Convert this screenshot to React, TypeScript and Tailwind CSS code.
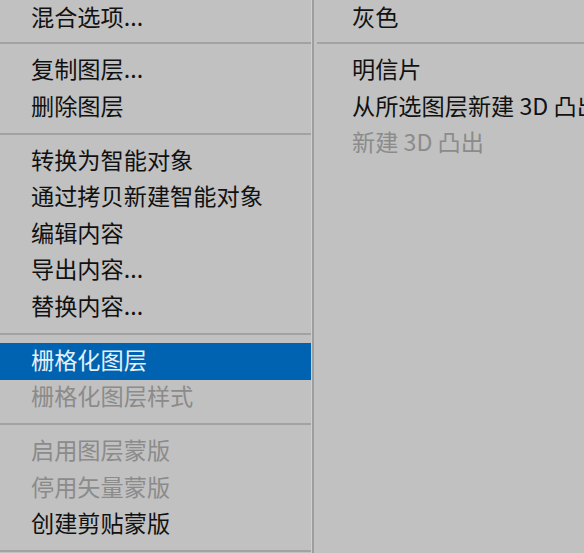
import React from "react";

type Item = { label: string; disabled?: boolean; active?: boolean } | "sep";

const left: Item[] = [
  { label: "混合选项..." },
  "sep",
  { label: "复制图层..." },
  { label: "删除图层" },
  "sep",
  { label: "转换为智能对象" },
  { label: "通过拷贝新建智能对象" },
  { label: "编辑内容" },
  { label: "导出内容..." },
  { label: "替换内容..." },
  "sep",
  { label: "栅格化图层", active: true },
  { label: "栅格化图层样式", disabled: true },
  "sep",
  { label: "启用图层蒙版", disabled: true },
  { label: "停用矢量蒙版", disabled: true },
  { label: "创建剪贴蒙版" },
  "sep",
];

const right: Item[] = [
  { label: "灰色" },
  "sep",
  { label: "明信片" },
  { label: "从所选图层新建 3D 凸出" },
  { label: "新建 3D 凸出", disabled: true },
];

function Column({ items, pad }: { items: Item[]; pad: string }) {
  return (
    <div className="flex flex-col">
      {items.map((it, i) =>
        it === "sep" ? (
          <div key={i} className="h-[17.5px] pt-[7px]">
            <div className="h-[2px] bg-[#a2a2a2]" />
          </div>
        ) : (
          <div
            key={i}
            className={`flex items-center whitespace-nowrap ${
              i === 0 ? "h-[35px] pb-[3px]" : "h-[36.5px] pb-[5px]"
            } ${pad} ${
              it.active
                ? "bg-[#0063b1] text-[#e6eef6]"
                : it.disabled
                ? "text-[#8b8b8b]"
                : "text-[#111111]"
            }`}
          >
            <span className="leading-[1.4]">{it.label}</span>
          </div>
        )
      )}
    </div>
  );
}

export default function App() {
  return (
    <div
      className="w-[584px] h-[553px] overflow-hidden bg-[#c1c1c1] flex text-[23.2px]"
      style={{ fontFamily: '"Microsoft YaHei", "Noto Sans CJK SC", sans-serif' }}
    >
      <div className="w-[311px] shrink-0">
        <Column items={left} pad="pl-[31px]" />
      </div>
      <div className="w-[1px] bg-[#cfcfcf] shrink-0" />
      <div className="w-[2px] bg-[#9e9e9e] shrink-0" />
      <div className="flex-1 pl-[3px] overflow-hidden">
        <Column items={right} pad="pl-[35px]" />
      </div>
    </div>
  );
}
